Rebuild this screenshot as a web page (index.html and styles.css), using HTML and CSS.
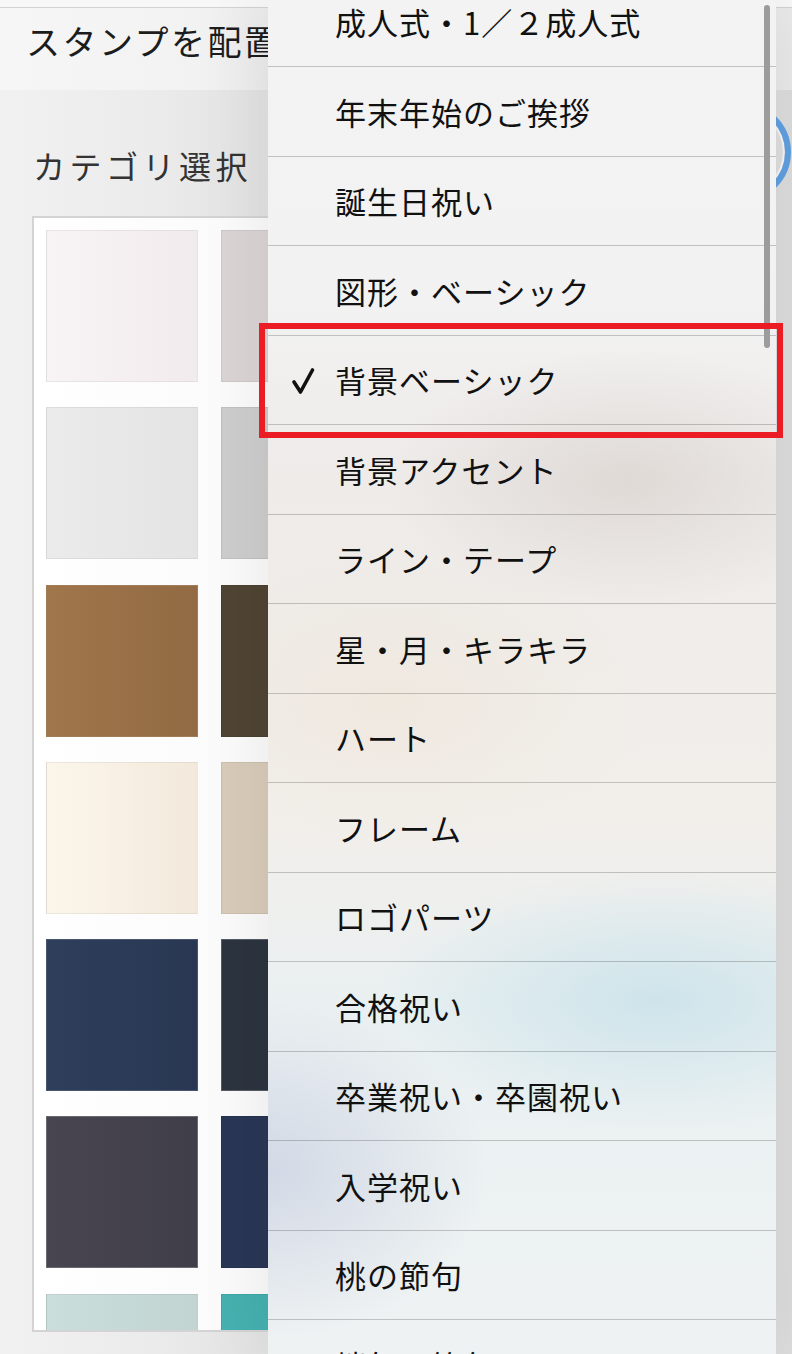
FILE: index.html
```html
<!DOCTYPE html>
<html lang="ja">
<head>
<meta charset="utf-8">
<title>スタンプを配置</title>
<link rel="stylesheet" href="styles.css">
</head>
<body>
<div class="page">
  <header class="topbar"><h1 class="title">スタンプを配置</h1></header>
  <section class="content">
    <div class="label-row">
      <span class="label">カテゴリ選択</span>
      <span class="circle-btn"></span>
    </div>
    <div class="grid-box">
      <div class="grid">
        <div class="sw c1"></div><div class="sw c2"></div><div class="sw c3"></div><div class="sw c4"></div>
        <div class="sw c5"></div><div class="sw c6"></div><div class="sw c7"></div><div class="sw c8"></div>
        <div class="sw c9"></div><div class="sw c10"></div><div class="sw c11"></div><div class="sw c12"></div>
        <div class="sw c13"></div><div class="sw c14"></div><div class="sw c15"></div><div class="sw c16"></div>
        <div class="sw c17"></div><div class="sw c18"></div><div class="sw c19"></div><div class="sw c20"></div>
        <div class="sw c21"></div><div class="sw c22"></div><div class="sw c23"></div><div class="sw c24"></div>
        <div class="sw c25"></div><div class="sw c26"></div><div class="sw c27"></div><div class="sw c28"></div>
      </div>
    </div>
  </section>
</div>

<div class="menu">
  <ul class="menu-list">
    <li class="item">成人式・1／２成人式</li>
    <li class="item">年末年始のご挨拶</li>
    <li class="item">誕生日祝い</li>
    <li class="item">図形・ベーシック</li>
    <li class="item checked"><svg class="check" width="24" height="28" viewBox="0 0 24 28"><path d="M3 15 L9.5 25 L21.5 3" fill="none" stroke="#111" stroke-width="3.6" stroke-linecap="round" stroke-linejoin="round"/></svg>背景ベーシック</li>
    <li class="item">背景アクセント</li>
    <li class="item">ライン・テープ</li>
    <li class="item">星・月・キラキラ</li>
    <li class="item">ハート</li>
    <li class="item">フレーム</li>
    <li class="item">ロゴパーツ</li>
    <li class="item">合格祝い</li>
    <li class="item">卒業祝い・卒園祝い</li>
    <li class="item">入学祝い</li>
    <li class="item">桃の節句</li>
    <li class="item">端午の節句</li>
  </ul>
  <div class="scrollbar"></div>
</div>

<div class="highlight"></div>
</body>
</html>
```

FILE: styles.css
```css
* { box-sizing: border-box; }

html, body {
  margin: 0;
  padding: 0;
}

body {
  width: 792px;
  height: 1354px;
  overflow: hidden;
  position: relative;
  font-family: "Noto Sans CJK JP", "Noto Sans", sans-serif;
  background: #f7f7f7;
}

.page {
  width: 792px;
  height: 1354px;
  display: flex;
  flex-direction: column;
}

.topbar {
  margin-top: 7px;
  height: 83px;
  border-top: 1px solid #d2d2d2;
  background: linear-gradient(to right, #f6f6f6 0%, #f2f2f2 25%, #ebebeb 34%, #e9e9e9 100%);
  padding: 16px 0 0 26px;
}

.title {
  margin: 0;
  font-size: 34px;
  line-height: 34px;
  font-weight: 400;
  letter-spacing: 2.5px;
  color: #1c1c1c;
}

.content {
  flex: 1;
  background: linear-gradient(to right, #f1f1f1 0%, #ebebeb 20%, #e2e2e2 33%, #dcdcdc 100%);
  padding-left: 32px;
  overflow: hidden;
}

.label-row {
  height: 126px;
  display: flex;
  justify-content: space-between;
  align-items: flex-start;
}

.label {
  margin-top: 59px;
  margin-left: 1px;
  font-size: 32px;
  line-height: 32px;
  letter-spacing: 4.5px;
  color: #333;
}

.circle-btn {
  margin-top: 12px;
  margin-right: 1px;
  width: 100px;
  height: 100px;
  border-radius: 50%;
  border: 6px solid #5f9fe0;
  background: #dedede;
  box-shadow: inset 0 0 0 2px #f6f6f6;
}

.grid-box {
  width: 728px;
  height: 1116px;
  border: 2px solid #d3d3d3;
  background: linear-gradient(to right, #ffffff 0%, #f8f8f8 45%, #ededed 100%);
  padding: 12px 0 0 12px;
  overflow: hidden;
}

.grid {
  display: grid;
  grid-template-columns: repeat(4, 152px);
  grid-auto-rows: 152px;
  column-gap: 23px;
  row-gap: 25.3px;
}

.sw {
  border: 1px solid rgba(0, 0, 0, 0.06);
}

.c1 { background: linear-gradient(to right, #f8f3f4, #f1ebed); }
.c2 { background: #dad4d4; }
.c3 { background: #e4dada; }
.c4 { background: #cfc8c8; }
.c5 { background: linear-gradient(to right, #ebebeb, #e4e4e4); }
.c6 { background: #cdcdcd; }
.c7 { background: #d9d9d9; }
.c8 { background: #bdbdbd; }
.c9 { background: linear-gradient(to right, #a0764b, #926a43); border-color: #a07c58; }
.c10 { background: #504434; }
.c11 { background: #6b5a42; }
.c12 { background: #3e3428; }
.c13 { background: linear-gradient(to right, #fcf6ea, #f2e9dc); }
.c14 { background: #d8cbb9; }
.c15 { background: #e9dcc6; }
.c16 { background: #c9b89e; }
.c17 { background: linear-gradient(to right, #2e3f5b, #293752); border-color: #4a5670; }
.c18 { background: #2c3440; border-color: #555c66; }
.c19 { background: #253048; }
.c20 { background: #1f2630; }
.c21 { background: linear-gradient(to right, #484550, #403e48); border-color: #6a6870; }
.c22 { background: #293655; }
.c23 { background: #35333c; }
.c24 { background: #1f2a44; }
.c25 { background: linear-gradient(to right, #cadedb, #c1d4d1); }
.c26 { background: #45b1b0; }
.c27 { background: #9fd0cf; }
.c28 { background: #2f8e8e; }

/* dropdown menu overlay */
.menu {
  position: absolute;
  left: 268px;
  top: 0;
  width: 508px;
  height: 1354px;
  overflow: hidden;
  background:
    radial-gradient(ellipse 240px 130px at 360px 480px, rgba(205, 196, 190, 0.45), rgba(205, 196, 190, 0) 100%),
    radial-gradient(ellipse 260px 160px at 120px 700px, rgba(238, 228, 214, 0.55), rgba(238, 228, 214, 0) 100%),
    radial-gradient(ellipse 280px 130px at 390px 1000px, rgba(196, 224, 233, 0.75), rgba(196, 224, 233, 0) 100%),
    radial-gradient(ellipse 220px 170px at 0px 1170px, rgba(200, 206, 224, 0.7), rgba(200, 206, 224, 0) 100%),
    linear-gradient(to bottom, #f3f3f3 0px, #f2f2f2 300px, #eeebe9 480px, #f2efeb 820px, #eaf0f1 1000px, #eef2f3 1354px);
  box-shadow: 0 0 70px rgba(0, 0, 0, 0.08);
}

.menu-list {
  list-style: none;
  margin: -22.5px 0 0 0;
  padding: 0;
}

.item {
  position: relative;
  height: 89.5px;
  border-bottom: 1px solid rgba(0, 0, 0, 0.2);
  display: flex;
  align-items: center;
  padding-left: 67px;
  font-size: 31px;
  letter-spacing: 1px;
  color: #111;
  white-space: nowrap;
}

.check {
  position: absolute;
  left: 23px;
  top: 31px;
}

.scrollbar {
  position: absolute;
  left: 496px;
  top: 5px;
  width: 6px;
  height: 343px;
  border-radius: 3px;
  background: #9c9c9c;
}

.highlight {
  position: absolute;
  left: 259px;
  top: 323px;
  width: 524px;
  height: 115px;
  border: 6px solid #ec1c24;
}
```
